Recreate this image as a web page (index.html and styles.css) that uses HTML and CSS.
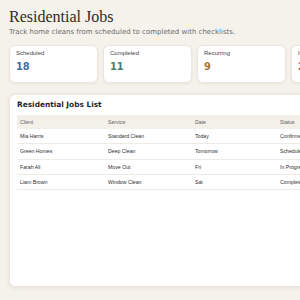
FILE: index.html
```html
<!DOCTYPE html>
<html lang="en">

<head>
    <meta charset="UTF-8">
    <meta name="viewport" content="width=device-width, initial-scale=1.0">
    <title>Residential Jobs</title>
    <link rel="stylesheet" href="styles.css">
</head>

<body>
    <div class="page">
        <h1>Residential Jobs</h1>
        <p class="subtitle">Track home cleans from scheduled to completed with checklists.</p>

        <div class="stats">
            <div class="stat">
                <div class="stat-label">Scheduled</div>
                <div class="stat-value blue">18</div>
            </div>
            <div class="stat">
                <div class="stat-label">Completed</div>
                <div class="stat-value green">11</div>
            </div>
            <div class="stat">
                <div class="stat-label">Recurring</div>
                <div class="stat-value gold">9</div>
            </div>
            <div class="stat">
                <div class="stat-label">Issues</div>
                <div class="stat-value red">2</div>
            </div>
        </div>

        <div class="panel">
            <h2>Residential Jobs List</h2>
            <table class="jobs">
                <thead>
                    <tr>
                        <th class="col-client">Client</th>
                        <th class="col-service">Service</th>
                        <th class="col-date">Date</th>
                        <th>Status</th>
                    </tr>
                </thead>
                <tbody>
                    <tr>
                        <td>Mia Harris</td>
                        <td>Standard Clean</td>
                        <td>Today</td>
                        <td>Confirmed</td>
                    </tr>
                    <tr>
                        <td>Green Homes</td>
                        <td>Deep Clean</td>
                        <td>Tomorrow</td>
                        <td>Scheduled</td>
                    </tr>
                    <tr>
                        <td>Farah Ali</td>
                        <td>Move Out</td>
                        <td>Fri</td>
                        <td>In Progress</td>
                    </tr>
                    <tr>
                        <td>Liam Brown</td>
                        <td>Window Clean</td>
                        <td>Sat</td>
                        <td>Completed</td>
                    </tr>
                </tbody>
            </table>
        </div>
    </div>
</body>

</html>
```

FILE: styles.css
```css
html,
body {
    overflow: hidden;
}

body {
    font-family: 'DejaVu Sans', sans-serif;
    background-color: #f5f2ec;
    color: #2f2f2f;
    margin: 0;
    padding: 7px 9px;
}

.page {
    width: 372px;
}

h1 {
    font-family: 'Liberation Serif', serif;
    font-size: 16px;
    font-weight: normal;
    color: #2b2b2b;
    margin: 0;
    line-height: 20px;
}

.subtitle {
    font-size: 7px;
    color: #6b6b6b;
    margin: 1px 0 9px;
}

.stats {
    display: grid;
    grid-template-columns: repeat(4, 89px);
    gap: 5px;
}

.stat {
    background-color: #fff;
    border: 1px solid #ebe6de;
    border-radius: 6px;
    box-shadow: 0 1px 3px rgba(80, 60, 30, 0.08);
    height: 38px;
    box-sizing: border-box;
    padding: 4px 6px;
}

.stat-label {
    font-family: 'Liberation Sans', Arial, sans-serif;
    font-size: 6px;
    color: #444;
    line-height: 7px;
    margin-bottom: 4px;
}

.stat-value {
    font-size: 9.8px;
    font-weight: bold;
    line-height: 11px;
}

.blue {
    color: #3f6f9f;
}

.green {
    color: #4a7c6c;
}

.gold {
    color: #a9772e;
}

.red {
    color: #b84a3a;
}

.panel {
    margin-top: 11px;
    background-color: #fff;
    border: 1px solid #ebe6de;
    border-radius: 6px;
    box-shadow: 0 1px 4px rgba(80, 60, 30, 0.1);
    height: 193px;
    box-sizing: border-box;
    padding: 5px 7px;
}

h2 {
    font-size: 7.4px;
    font-weight: bold;
    color: #1f1f1f;
    line-height: 9px;
    margin: 0 0 6px;
}

.jobs {
    width: 100%;
    border-collapse: collapse;
    font-family: 'Liberation Sans', Arial, sans-serif;
    font-size: 5.2px;
}

.jobs th {
    background-color: #f3efe9;
    color: #5f5f5f;
    font-weight: normal;
    text-align: left;
    height: 14px;
    padding: 0 3px;
}

.jobs td {
    color: #2f2f2f;
    height: 14.3px;
    padding: 0 3px;
    border-bottom: 1px solid #eeeae4;
}

.col-client {
    width: 82px;
}

.col-service {
    width: 81px;
}

.col-date {
    width: 79px;
}
```
